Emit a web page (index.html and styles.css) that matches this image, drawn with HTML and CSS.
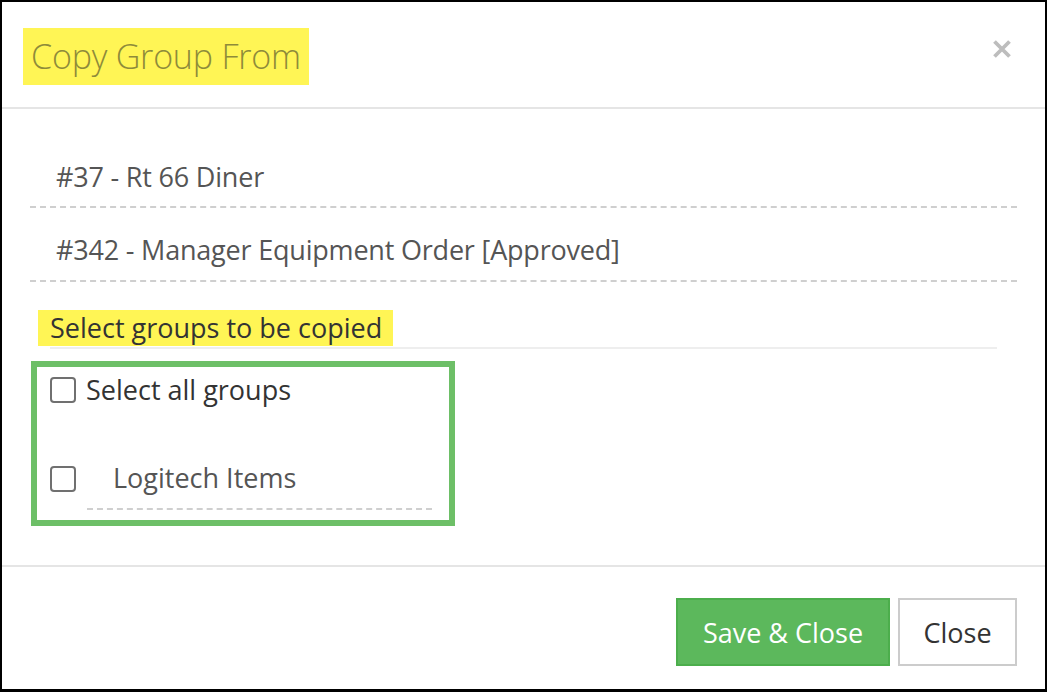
FILE: index.html
```html
<!DOCTYPE html>
<html>
<head>
<meta charset="utf-8">
<link rel="stylesheet" href="styles.css">
</head>
<body>
<div class="modal">
  <div class="modal-header">
    <h1 class="title">Copy Group From</h1>
    <svg class="close-x" width="20" height="20" viewBox="0 0 20 20" aria-label="Close">
      <path d="M2.5 2.5 L17.5 17.5 M17.5 2.5 L2.5 17.5" stroke="#bdbdbd" stroke-width="3.8" stroke-linecap="butt" fill="none"/>
    </svg>
  </div>
  <div class="modal-body">
    <div class="info-row first">#37 - Rt 66 Diner</div>
    <div class="info-row second">#342 - Manager Equipment Order [Approved]</div>
    <div class="section">
      <span class="section-title">Select groups to be copied</span>
    </div>
    <div class="groups">
      <label class="check-row select-all"><span class="box"></span><span>Select all groups</span></label>
      <label class="check-row group-item"><span class="box"></span><span class="group-name">Logitech Items</span></label>
    </div>
  </div>
  <div class="modal-footer">
    <button class="btn btn-save">Save &amp; Close</button>
    <button class="btn btn-close">Close</button>
  </div>
</div>
</body>
</html>
```
FILE: styles.css
```css
* { box-sizing: border-box; }
html, body { margin: 0; padding: 0; background: #fff; }
body { font-family: "Open Sans", "Noto Sans", sans-serif; color: #555; }

.modal {
  width: 1047px;
  height: 692px;
  border: 2px solid #000;
  border-bottom-width: 3px;
  display: flex;
  flex-direction: column;
  overflow: hidden;
}

.modal-header {
  height: 107px;
  flex: none;
  border-bottom: 2px solid #e5e5e5;
  display: flex;
  align-items: flex-start;
  justify-content: space-between;
  padding: 26px 33px 0 21px;
}
.title {
  margin: 0;
  background: #fff555;
  color: #8e8b3a;
  font-weight: 300;
  font-size: 34px;
  line-height: 57px;
  height: 57px;
  padding: 0 8px 0 8px;
  letter-spacing: -0.2px;
}
.close-x {
  display: block;
  margin-top: 11px;
}

.modal-body {
  flex: 1;
  padding: 0 28px;
  display: flex;
  flex-direction: column;
}
.info-row {
  font-size: 27px;
  color: #555;
  line-height: 36px;
  padding-left: 26px;
  border-bottom: 2px dashed #cfcfcf;
  letter-spacing: -0.2px;
}
.info-row.first { padding-top: 50px; padding-bottom: 11px; }
.info-row.second { padding-top: 24px; padding-bottom: 12px; }

.section {
  margin: 28px 20px 0 20px;
  height: 39px;
  border-bottom: 2px solid #eeeeee;
}
.section-title {
  display: inline-block;
  margin-left: -12px;
  background: #fff555;
  color: #333;
  font-size: 27px;
  line-height: 36px;
  height: 36px;
  padding: 0 11px 0 12px;
}

.groups {
  margin-top: 12px;
  margin-left: 1px;
  width: 424px;
  height: 165px;
  border: 6px solid #6dbf67;
  padding: 5px 17px 0 13px;
  display: flex;
  flex-direction: column;
}
.check-row {
  display: flex;
  font-size: 27px;
  line-height: 36px;
  color: #333;
}
.select-all { align-items: center; height: 36px; }
.select-all .box { margin-right: 10px; }
.box {
  width: 26px;
  height: 26px;
  border: 2px solid #707070;
  border-radius: 4px;
  flex: none;
}
.group-item { margin-top: 52px; align-items: flex-start; }
.group-item .box { margin-top: 6px; }
.group-name {
  flex: 1;
  margin-left: 11px;
  padding: 0 0 12px 26px;
  border-bottom: 2px dashed #cfcfcf;
  color: #555;
}

.modal-footer {
  height: 124px;
  flex: none;
  border-top: 2px solid #e5e5e5;
  display: flex;
  justify-content: flex-end;
  align-items: flex-start;
  padding: 31px 28px 0 0;
  gap: 8px;
}
.btn {
  font-family: "Open Sans", "Noto Sans", sans-serif;
  font-size: 27px;
  height: 68px;
  border-radius: 0;
  padding: 0;
  cursor: pointer;
}
.btn-save {
  width: 214px;
  background: #5cb85c;
  border: 2px solid #4cae4c;
  color: #fff;
}
.btn-close {
  width: 119px;
  background: #fff;
  border: 2px solid #cccccc;
  color: #333;
}
```
